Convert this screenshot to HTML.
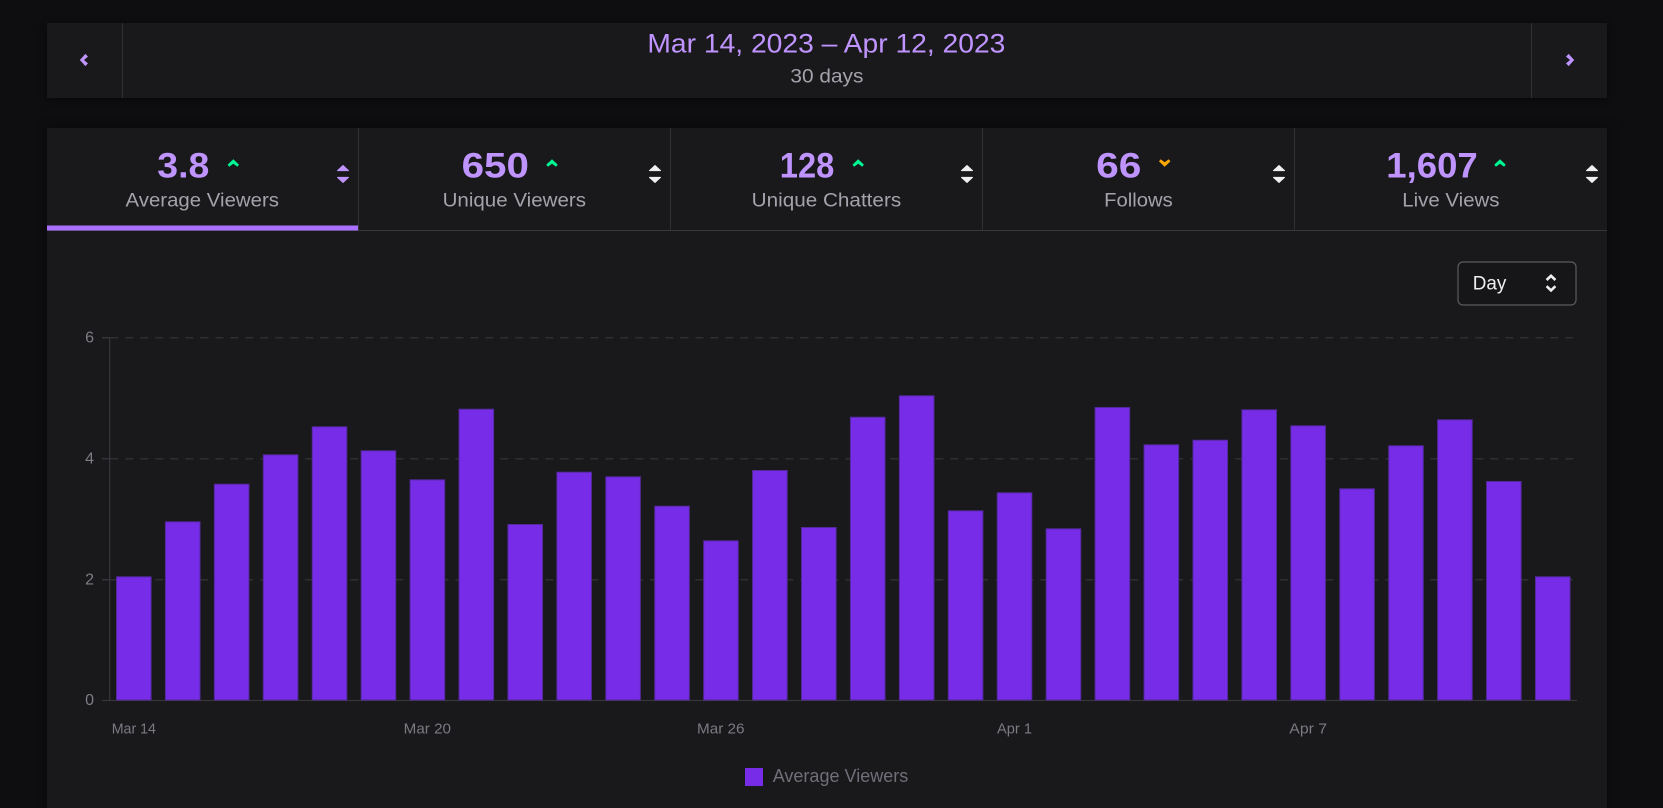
<!DOCTYPE html>
<html lang="en"><head><meta charset="utf-8"><title>Stream Analytics</title>
<style>
html,body{margin:0;padding:0;background:#0e0e10;width:1663px;height:808px;overflow:hidden}
svg{display:block}
text{font-family:"Liberation Sans",sans-serif}
.d{fill:#bf94ff}
.n{fill:#bf94ff;font-size:35px;font-weight:700}
.l{fill:#a3a3ab;font-size:19.5px}
.t{fill:#7d7d85;font-size:16px}
.x{fill:#7a7a83;font-size:14.5px}
.b rect{fill:#772ce8;stroke:#54299c;stroke-width:1}
.up{fill:#00f593}
</style></head><body>
<svg width="1663" height="808" viewBox="0 0 1663 808" xmlns="http://www.w3.org/2000/svg">
<defs>
<filter id="s" x="-5%" y="-30%" width="110%" height="160%" color-interpolation-filters="sRGB"><feGaussianBlur stdDeviation="4"/></filter>
<filter id="s2" x="-5%" y="-5%" width="110%" height="110%" color-interpolation-filters="sRGB"><feGaussianBlur stdDeviation="6"/></filter>
</defs>
<rect width="1663" height="808" fill="#0e0e10"/>

<!-- Date panel -->
<rect x="47" y="24" width="1560" height="75" fill="#000" opacity=".55" filter="url(#s)"/>
<rect x="47" y="23" width="1560" height="75" fill="#19191b"/>
<rect x="122" y="23" width="1" height="75" fill="#313135"/>
<rect x="1531" y="23" width="1" height="75" fill="#313135"/>
<path d="M79.8 60L85.4 53.9L88 56.6L84 60L88 63.4L85.4 66.1Z" fill="#bf94ff"/>
<path d="M1574.2 60L1568.6 53.9L1566 56.6L1570 60L1566 63.4L1568.6 66.1Z" fill="#bf94ff"/>
<text class="d" x="647.4" y="52.5" font-size="26.5" textLength="358" lengthAdjust="spacingAndGlyphs">Mar 14, 2023 – Apr 12, 2023</text>
<text x="790.4" y="82.7" font-size="19.5" fill="#a3a3ab" textLength="73" lengthAdjust="spacingAndGlyphs">30 days</text>

<!-- Main panel -->
<rect x="47" y="128" width="1560" height="700" fill="#000" opacity=".5" filter="url(#s2)"/>
<rect x="47" y="128" width="1560" height="700" fill="#19191b"/>
<rect x="47" y="230" width="1560" height="1" fill="#36363b"/>
<rect x="358" y="128" width="1" height="102" fill="#313135"/>
<rect x="670" y="128" width="1" height="102" fill="#313135"/>
<rect x="982" y="128" width="1" height="102" fill="#313135"/>
<rect x="1294" y="128" width="1" height="102" fill="#313135"/>
<rect x="47" y="225.5" width="311" height="5" fill="#a970ff"/>

<!-- Tabs -->
<text class="n" x="157.3" y="177.7" textLength="52" lengthAdjust="spacingAndGlyphs">3.8</text>
<text class="l" x="125.5" y="206.7" textLength="153.5" lengthAdjust="spacingAndGlyphs">Average Viewers</text>
<text class="n" x="461.6" y="177.7" textLength="67.3" lengthAdjust="spacingAndGlyphs">650</text>
<text class="l" x="442.6" y="206.7" textLength="143.4" lengthAdjust="spacingAndGlyphs">Unique Viewers</text>
<text class="n" x="779.8" y="177.7" textLength="54.5" lengthAdjust="spacingAndGlyphs">128</text>
<text class="l" x="751.7" y="206.7" textLength="149.5" lengthAdjust="spacingAndGlyphs">Unique Chatters</text>
<text class="n" x="1096.2" y="177.7" textLength="45.2" lengthAdjust="spacingAndGlyphs">66</text>
<text class="l" x="1104.2" y="206.7" textLength="68.5" lengthAdjust="spacingAndGlyphs">Follows</text>
<text class="n" x="1386.3" y="177.7" textLength="91.4" lengthAdjust="spacingAndGlyphs">1,607</text>
<text class="l" x="1402.3" y="206.7" textLength="97.2" lengthAdjust="spacingAndGlyphs">Live Views</text>

<!-- Trend chevrons -->
<path class="up" d="M233.3 159.3L239 164.6L237.4 166.7L233.3 163.8L229.2 166.7L227.6 164.6Z"/>
<path class="up" d="M552 159.3L557.7 164.6L556.1 166.7L552 163.8L547.9 166.7L546.3 164.6Z"/>
<path class="up" d="M858.2 159.3L863.9 164.6L862.3 166.7L858.2 163.8L854.1 166.7L852.5 164.6Z"/>
<path d="M1164.7 166.7L1170.4 161.4L1168.8 159.3L1164.7 162.2L1160.6 159.3L1159 161.4Z" fill="#ffa800"/>
<path class="up" d="M1500 159.3L1505.7 164.6L1504.1 166.7L1500 163.8L1495.9 166.7L1494.3 164.6Z"/>

<!-- Sort arrows -->
<g stroke-width="1" stroke-linejoin="round">
<path d="M343 165.5L348.5 170.6H337.5ZM343 182.5L337.5 177.4H348.5Z" fill="#bf94ff" stroke="#bf94ff"/>
<path d="M655 165.5L660.5 170.6H649.5ZM655 182.5L649.5 177.4H660.5Z" fill="#efeff1" stroke="#efeff1"/>
<path d="M967 165.5L972.5 170.6H961.5ZM967 182.5L961.5 177.4H972.5Z" fill="#efeff1" stroke="#efeff1"/>
<path d="M1279 165.5L1284.5 170.6H1273.5ZM1279 182.5L1273.5 177.4H1284.5Z" fill="#efeff1" stroke="#efeff1"/>
<path d="M1592 165.5L1597.5 170.6H1586.5ZM1592 182.5L1586.5 177.4H1597.5Z" fill="#efeff1" stroke="#efeff1"/>
</g>

<!-- Select -->
<rect x="1458" y="262" width="118" height="43" rx="5" fill="#161618" stroke="#5a5a60" stroke-width="1.2"/>
<text x="1472.7" y="289.3" font-size="19" fill="#efeff1" textLength="33.6" lengthAdjust="spacingAndGlyphs">Day</text>
<path d="M1546.6 280L1551 275.8L1555.4 280M1546.6 286.2L1551 290.4L1555.4 286.2" fill="none" stroke="#efeff1" stroke-width="2.6"/>

<!-- Grid -->
<g fill="none">
<path stroke="#2f2f33" stroke-width="1.5" stroke-dasharray="8 7" d="M110.3 337.7H1573M110.3 458.7H1573M110.3 579.7H1573"/>
<path stroke="#36363a" stroke-width="1.3" d="M102 337.7H110M102 458.7H110M102 579.7H110M102 700.5H1577M109.7 337V700"/>
</g>

<!-- Bars -->
<g class="b">
<rect x="116.5" y="576.8" width="34.6" height="123.2"/>
<rect x="165.43" y="521.8" width="34.6" height="178.2"/>
<rect x="214.36" y="484.2" width="34.6" height="215.8"/>
<rect x="263.29" y="454.8" width="34.6" height="245.2"/>
<rect x="312.22" y="426.8" width="34.6" height="273.2"/>
<rect x="361.15" y="450.8" width="34.6" height="249.2"/>
<rect x="410.08" y="479.8" width="34.6" height="220.2"/>
<rect x="459.01" y="409.2" width="34.6" height="290.8"/>
<rect x="507.94" y="524.5" width="34.6" height="175.5"/>
<rect x="556.87" y="472.2" width="34.6" height="227.8"/>
<rect x="605.8" y="476.8" width="34.6" height="223.2"/>
<rect x="654.73" y="506.2" width="34.6" height="193.8"/>
<rect x="703.66" y="540.8" width="34.6" height="159.2"/>
<rect x="752.59" y="470.5" width="34.6" height="229.5"/>
<rect x="801.52" y="527.5" width="34.6" height="172.5"/>
<rect x="850.45" y="417.2" width="34.6" height="282.8"/>
<rect x="899.38" y="395.8" width="34.6" height="304.2"/>
<rect x="948.31" y="510.8" width="34.6" height="189.2"/>
<rect x="997.24" y="492.8" width="34.6" height="207.2"/>
<rect x="1046.17" y="528.8" width="34.6" height="171.2"/>
<rect x="1095.1" y="407.5" width="34.6" height="292.5"/>
<rect x="1144.03" y="444.8" width="34.6" height="255.2"/>
<rect x="1192.96" y="440.2" width="34.6" height="259.8"/>
<rect x="1241.89" y="409.8" width="34.6" height="290.2"/>
<rect x="1290.82" y="425.8" width="34.6" height="274.2"/>
<rect x="1339.75" y="488.8" width="34.6" height="211.2"/>
<rect x="1388.68" y="445.8" width="34.6" height="254.2"/>
<rect x="1437.61" y="419.8" width="34.6" height="280.2"/>
<rect x="1486.54" y="481.5" width="34.6" height="218.5"/>
<rect x="1535.47" y="576.8" width="34.6" height="123.2"/>
</g>

<!-- Axis labels -->
<text class="t" x="94" y="342.3" text-anchor="end">6</text>
<text class="t" x="94" y="463.3" text-anchor="end">4</text>
<text class="t" x="94" y="584.4" text-anchor="end">2</text>
<text class="t" x="94" y="705" text-anchor="end">0</text>
<text class="x" x="111.7" y="733.3" textLength="44.3" lengthAdjust="spacingAndGlyphs">Mar 14</text>
<text class="x" x="403.7" y="733.3" textLength="47.3" lengthAdjust="spacingAndGlyphs">Mar 20</text>
<text class="x" x="697" y="733.3" textLength="47.5" lengthAdjust="spacingAndGlyphs">Mar 26</text>
<text class="x" x="997" y="733.3" textLength="35" lengthAdjust="spacingAndGlyphs">Apr 1</text>
<text class="x" x="1289.3" y="733.3" textLength="37.7" lengthAdjust="spacingAndGlyphs">Apr 7</text>

<!-- Legend -->
<rect x="745" y="768" width="18" height="18" fill="#772ce8"/>
<text x="772.7" y="782" font-size="18" fill="#6f6f79" textLength="135.6" lengthAdjust="spacingAndGlyphs">Average Viewers</text>
</svg>
</body></html>
